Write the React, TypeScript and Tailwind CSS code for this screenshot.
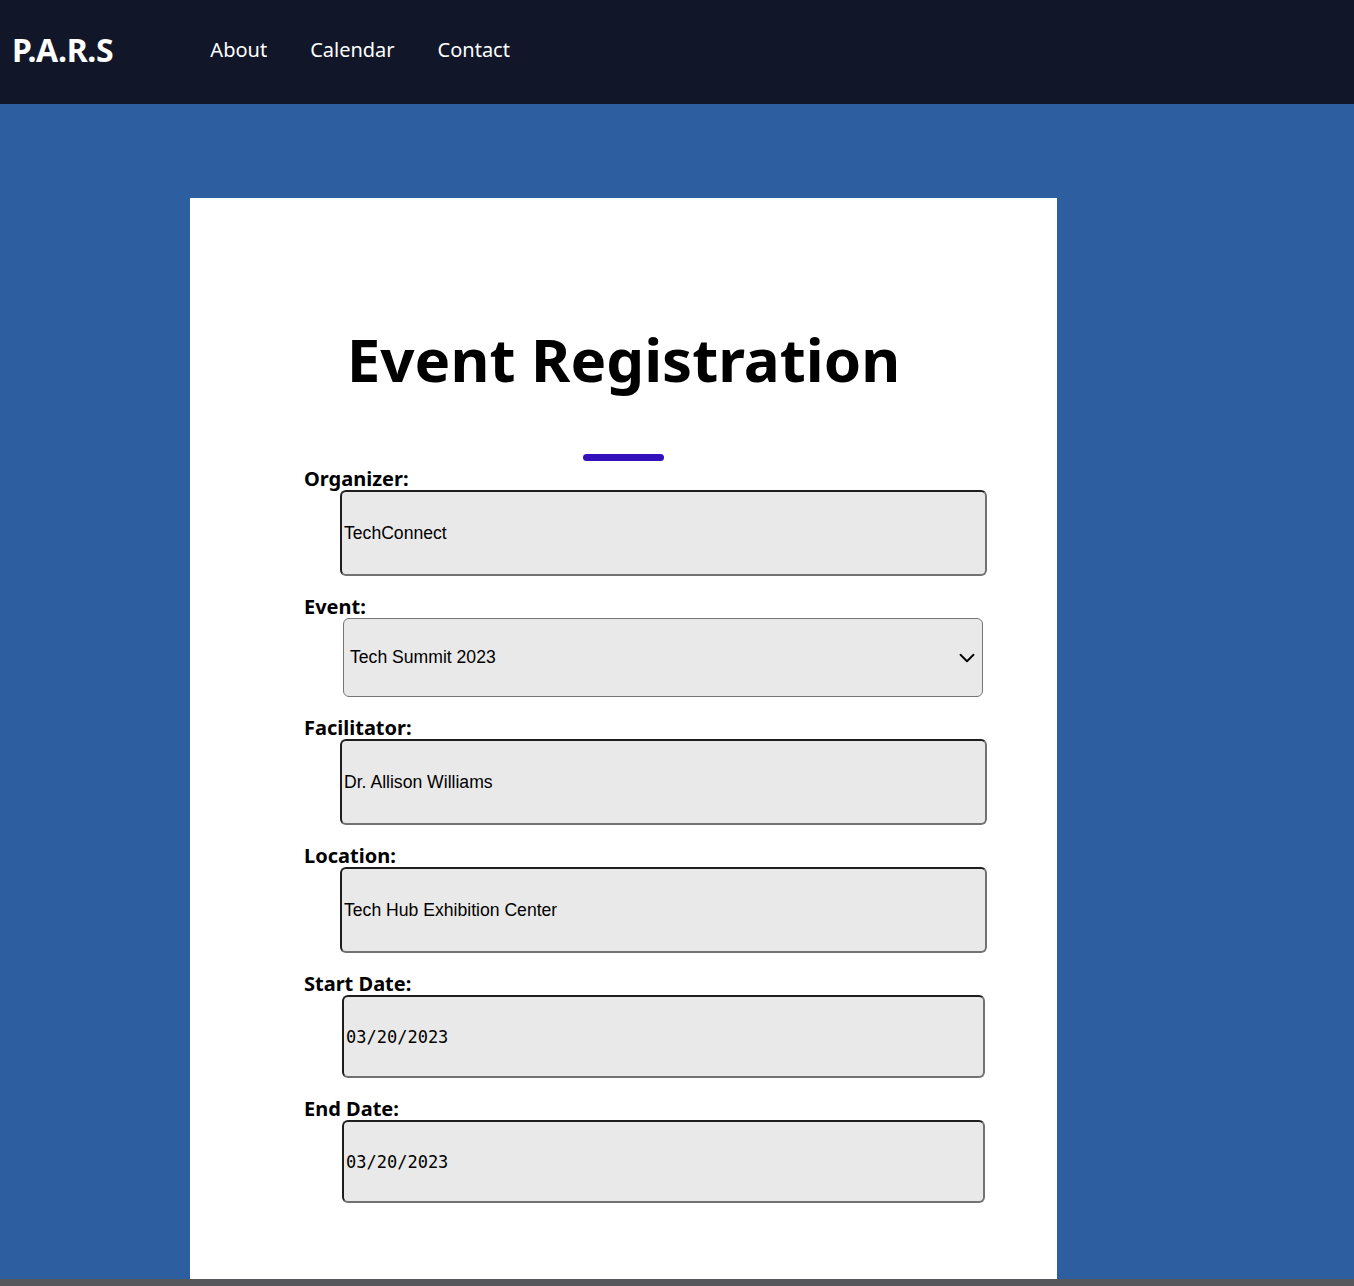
import { ChevronDown } from 'lucide-react';

const sans = "font-['Noto_Sans','Open_Sans',sans-serif]";
const arial = "font-['Liberation_Sans',Arial,sans-serif]";

const fieldBox =
  'block bg-[#e9e9e9] text-black rounded-[6px] border-2 border-t-[#1e1e1e] border-l-[#1e1e1e] border-b-[#727272] border-r-[#727272] outline-none';

const Label = ({ children }: { children: string }) => (
  <label className={`block text-[20px] leading-[22px] font-bold text-black ${sans}`}>{children}</label>
);

const TextField = ({ label, value }: { label: string; value: string }) => (
  <div>
    <Label>{label}</Label>
    <input
      readOnly
      value={value}
      className={`${fieldBox} ${arial} text-[17.6px] px-[2px] ml-[36px] w-[647px] h-[86px]`}
    />
  </div>
);

const DateField = ({ label, value }: { label: string; value: string }) => (
  <div>
    <Label>{label}</Label>
    <input
      readOnly
      value={value}
      className={`${fieldBox} font-['DejaVu_Sans_Mono',monospace] text-[17px] px-[2px] ml-[38px] w-[643px] h-[83px]`}
    />
  </div>
);

export default function App() {
  return (
    <div className="min-h-[1286px] bg-[#2d5e9f] flex flex-col">
      <header className="h-[104px] bg-[#111729] flex items-center pl-[12px] pb-[5px]">
        <div className={`text-white font-bold text-[32px] tracking-[-0.3px] ${sans}`}>P.A.R.S</div>
        <nav className={`flex items-center gap-[43px] ml-[97px] text-white text-[20px] ${sans}`}>
          <a>About</a>
          <a>Calendar</a>
          <a>Contact</a>
        </nav>
      </header>

      <main className="flex-1 pt-[94px]">
        <div className="ml-[190px] w-[867px] h-[1081px] bg-white pt-[131px] pl-[114px]">
          <div className="w-[639px] flex flex-col items-center">
            <h1 className={`text-[60px] leading-none font-bold text-black ${sans}`}>Event Registration</h1>
            <div className="mt-[65px] w-[81px] h-[7px] rounded-full bg-[#3311bb]" />
          </div>

          <form className="flex flex-col gap-[20px] mt-[7px]">
            <TextField label="Organizer:" value="TechConnect" />

            <div>
              <Label>Event:</Label>
              <div
                className={`ml-[39px] w-[640px] h-[79px] bg-[#e9e9e9] border border-[#767676] rounded-[6px] flex items-center justify-between pl-[6px] pr-[2px] text-[17.6px] text-black ${arial}`}
              >
                <span>Tech Summit 2023</span>
                <ChevronDown size={26} strokeWidth={1.7} className="text-black" />
              </div>
            </div>

            <TextField label="Facilitator:" value="Dr. Allison Williams" />
            <TextField label="Location:" value="Tech Hub Exhibition Center" />
            <DateField label="Start Date:" value="03/20/2023" />
            <DateField label="End Date:" value="03/20/2023" />
          </form>
        </div>
      </main>

      <div className="h-[7px] bg-[#55575c]" />
    </div>
  );
}
